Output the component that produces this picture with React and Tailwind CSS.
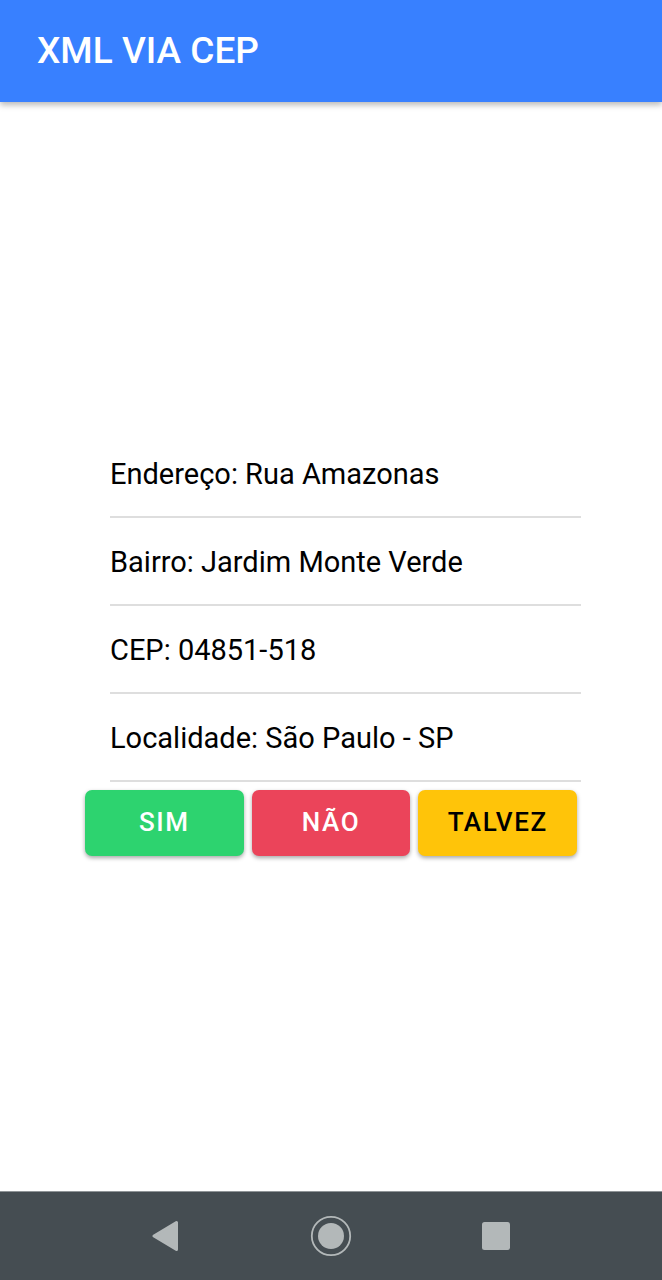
const fields = [
  { label: 'Endereço', value: 'Rua Amazonas' },
  { label: 'Bairro', value: 'Jardim Monte Verde' },
  { label: 'CEP', value: '04851-518' },
  { label: 'Localidade', value: 'São Paulo - SP' },
];

const answers = [
  { text: 'SIM', color: 'bg-[#2dd36f] text-white' },
  { text: 'NÃO', color: 'bg-[#eb445a] text-white' },
  { text: 'TALVEZ', color: 'bg-[#ffc409] text-black' },
];

function Header() {
  return (
    <header className="relative flex h-[102px] items-center bg-[#3880ff] px-[37px] pb-[2px] shadow-[0_3px_6px_rgba(0,0,0,0.28)]">
      <h1 className="text-[37px] leading-none font-medium text-white">XML VIA CEP</h1>
    </header>
  );
}

function AddressList() {
  return (
    <ul className="pl-[29px]">
      {fields.map(({ label, value }) => (
        <li key={label} className="flex h-[88px] items-center border-b-2 border-[#dedede] pt-1 text-[29px] text-black">
          {label}: {value}
        </li>
      ))}
    </ul>
  );
}

function Answers() {
  return (
    <div className="grid grid-cols-3 gap-2 px-1 py-2">
      {answers.map(({ text, color }) => (
        <button
          key={text}
          type="button"
          className={`h-[66px] rounded-[7px] text-[26px] font-medium tracking-[0.06em] shadow-[0_2px_4px_rgba(0,0,0,0.35)] ${color}`}
        >
          {text}
        </button>
      ))}
    </div>
  );
}

function SystemNav() {
  return (
    <nav className="grid h-[89px] grid-cols-3 border-t border-[#8f9497] bg-[#454d52] px-[83px] text-[#b3b8b9]">
      <button type="button" aria-label="Voltar" className="flex items-center justify-center">
        <svg width="28" height="32" viewBox="0 0 28 32" fill="currentColor" stroke="currentColor" strokeWidth="3" strokeLinejoin="round">
          <path d="M2 16 L24.5 2.5 V29.5 Z" />
        </svg>
      </button>
      <button type="button" aria-label="Início" className="flex items-center justify-center">
        <svg width="42" height="42" viewBox="0 0 42 42">
          <circle cx="21" cy="21" r="19.2" fill="none" stroke="currentColor" strokeWidth="1.8" />
          <circle cx="21" cy="21" r="13" fill="currentColor" />
        </svg>
      </button>
      <button type="button" aria-label="Recentes" className="flex items-center justify-center">
        <svg width="28" height="28" viewBox="0 0 28 28" fill="currentColor">
          <rect width="28" height="28" rx="2.5" />
        </svg>
      </button>
    </nav>
  );
}

export default function App() {
  return (
    <div className="flex min-h-screen flex-col bg-white font-['Roboto',sans-serif]">
      <Header />
      <main className="flex flex-1 flex-col justify-center px-[81px]">
        <AddressList />
        <Answers />
      </main>
      <SystemNav />
    </div>
  );
}
